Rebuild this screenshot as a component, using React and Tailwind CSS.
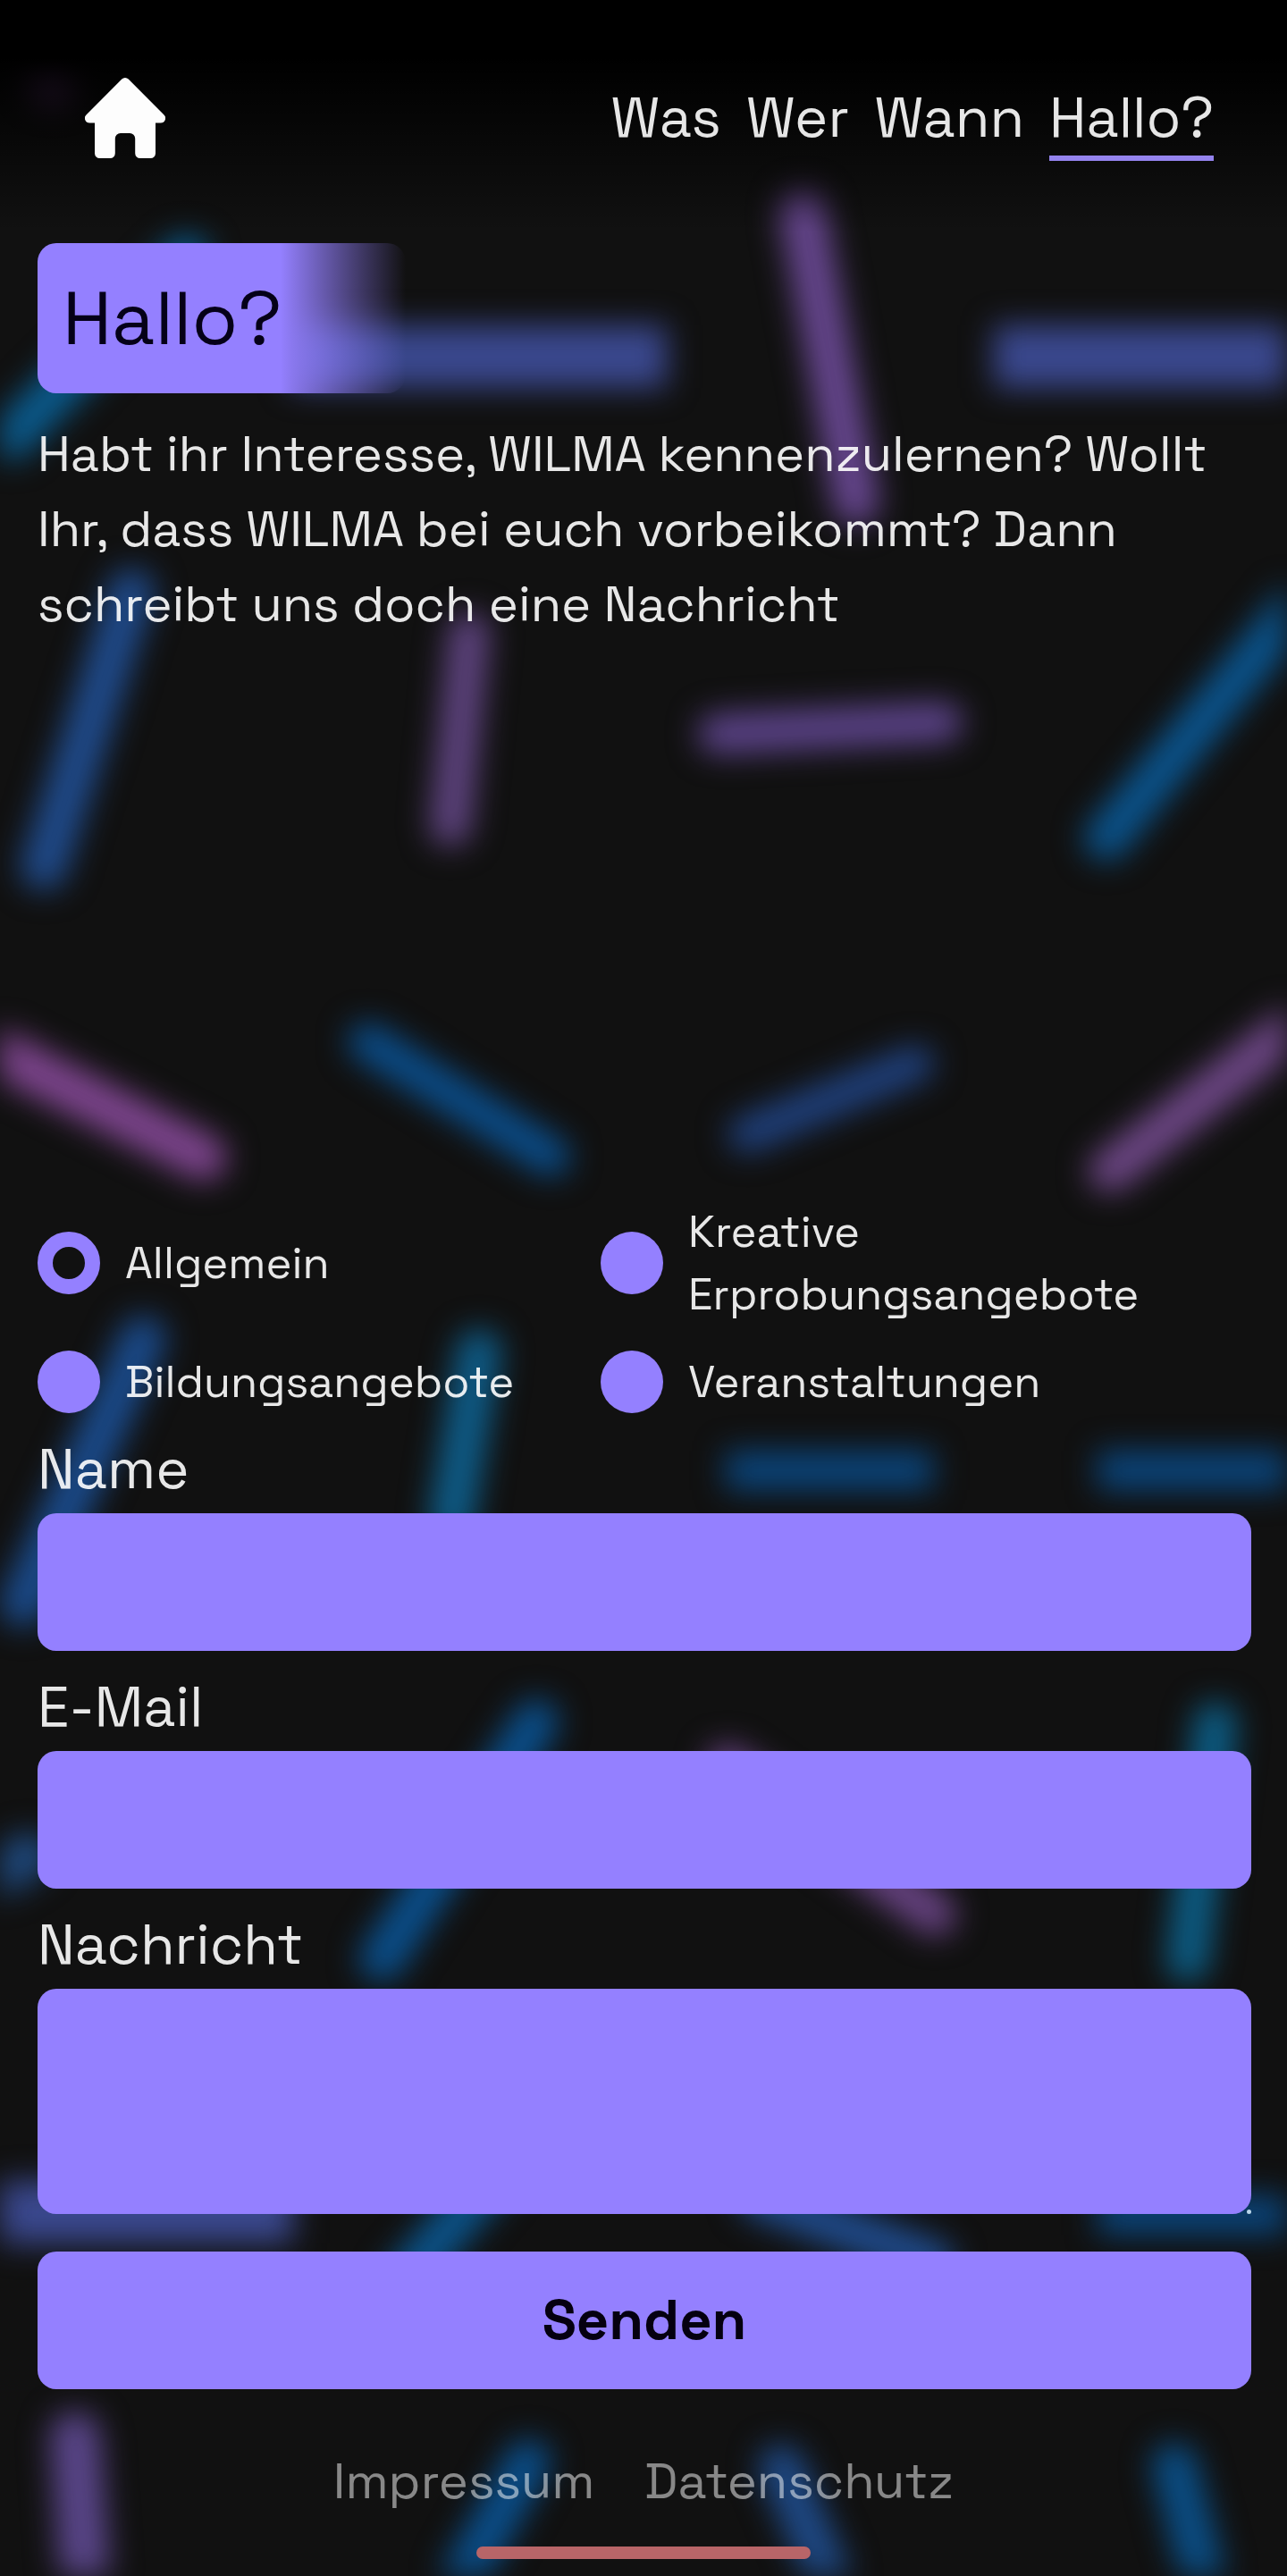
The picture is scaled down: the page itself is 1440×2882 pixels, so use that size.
import { useState } from "react";

const strokes = [
  { x1: 325, y1: 399, x2: 746, y2: 399, w: 70, c: "#3a488e", cap: "butt" },
  { x1: 1112, y1: 399, x2: 1440, y2: 399, w: 70, c: "#3a488e", cap: "butt" },
  { x1: 898, y1: 238, x2: 958, y2: 562, w: 52, c: "#66468e" },
  { x1: 209, y1: 288, x2: 12, y2: 490, w: 50, c: "#0a5a8c" },
  { x1: 56, y1: 82, x2: 58, y2: 90, w: 52, c: "#6a3a80" },
  { x1: 147, y1: 662, x2: 49, y2: 970, w: 52, c: "#1f4a8a" },
  { x1: 525, y1: 708, x2: 504, y2: 924, w: 46, c: "#5f4480" },
  { x1: 804, y1: 821, x2: 1054, y2: 808, w: 46, c: "#5a4286" },
  { x1: 1455, y1: 672, x2: 1238, y2: 938, w: 50, c: "#0a528a" },
  { x1: -20, y1: 1168, x2: 228, y2: 1295, w: 52, c: "#7c448c" },
  { x1: 412, y1: 1166, x2: 616, y2: 1294, w: 44, c: "#0a4c88" },
  { x1: 836, y1: 1269, x2: 1024, y2: 1190, w: 42, c: "#1f407c" },
  { x1: 1455, y1: 1142, x2: 1242, y2: 1310, w: 48, c: "#6c4684" },
  { x1: 160, y1: 1498, x2: 26, y2: 1794, w: 52, c: "#1a4a8a" },
  { x1: 536, y1: 1512, x2: 505, y2: 1700, w: 50, c: "#0e5c88" },
  { x1: 812, y1: 1645, x2: 1044, y2: 1645, w: 44, c: "#0a447a", cap: "butt" },
  { x1: 1228, y1: 1645, x2: 1440, y2: 1645, w: 44, c: "#0a447a", cap: "butt" },
  { x1: 600, y1: 1926, x2: 427, y2: 2192, w: 50, c: "#0a4e8a" },
  { x1: 814, y1: 1976, x2: 1046, y2: 2142, w: 48, c: "#664280" },
  { x1: 1360, y1: 1928, x2: 1329, y2: 2194, w: 48, c: "#0c5c84" },
  { x1: -20, y1: 2108, x2: 32, y2: 2076, w: 50, c: "#1f4a80" },
  { x1: 0, y1: 2475, x2: 328, y2: 2475, w: 70, c: "#3a488e", cap: "butt" },
  { x1: 600, y1: 2378, x2: 452, y2: 2552, w: 50, c: "#0b5288" },
  { x1: 850, y1: 2458, x2: 1044, y2: 2530, w: 48, c: "#1f4a8a" },
  { x1: 1228, y1: 2478, x2: 1440, y2: 2478, w: 44, c: "#0a447a", cap: "butt" },
  { x1: 84, y1: 2726, x2: 96, y2: 2895, w: 56, c: "#5a468a" },
  { x1: 591, y1: 2754, x2: 512, y2: 2895, w: 50, c: "#0a4e8a" },
  { x1: 874, y1: 2760, x2: 928, y2: 2885, w: 50, c: "#1e4986" },
  { x1: 1314, y1: 2758, x2: 1347, y2: 2885, w: 50, c: "#0a4e86" },
];

const topics = ["Allgemein", "Kreative Erprobungsangebote", "Bildungsangebote", "Veranstaltungen"];

const navLinks = ["Was", "Wer", "Wann", "Hallo?"];

function Backdrop() {
  return (
    <svg
      aria-hidden="true"
      viewBox="0 0 1440 2882"
      preserveAspectRatio="xMidYMin slice"
      className="absolute inset-0 h-full w-full overflow-hidden blur-[17px]"
    >
      {strokes.map((s, i) => (
        <line
          key={i}
          x1={s.x1}
          y1={s.y1}
          x2={s.x2}
          y2={s.y2}
          stroke={s.c}
          strokeWidth={s.w}
          strokeLinecap={s.cap || "round"}
        />
      ))}
    </svg>
  );
}

function HomeIcon() {
  return (
    <svg viewBox="0 0 90 90" className="size-[90px]" fill="#fdfdfd" aria-hidden="true">
      <path d="M41.3 1.6a5.3 5.3 0 0 1 7.4 0L88.5 41.4A5.3 5.3 0 0 1 84.7 50.5H79V84.5a5.5 5.5 0 0 1-5.5 5.5H61.7a5.5 5.5 0 0 1-5.5-5.5V68a6 6 0 0 0-6-6H39.8a6 6 0 0 0-6 6V84.5a5.5 5.5 0 0 1-5.5 5.5H16.5a5.5 5.5 0 0 1-5.5-5.5V50.5H5.3A5.3 5.3 0 0 1 1.5 41.4Z" />
    </svg>
  );
}

function Field({ id, label, children }) {
  return (
    <div className="mt-[14px] flex flex-col">
      <label htmlFor={id} className="pb-[2px] text-[63px] leading-[96px]">
        {label}
      </label>
      {children}
    </div>
  );
}

export default function App() {
  const [topic, setTopic] = useState(topics[0]);
  return (
    <div className="relative isolate flex min-h-screen flex-col overflow-hidden bg-[#111111] font-['Space_Grotesk','Inter',sans-serif] text-white/90">
      <div className="absolute inset-0 -z-10">
        <Backdrop />
        <div className="absolute inset-x-0 top-0 h-[260px] bg-linear-to-b from-black from-25% to-transparent" />
      </div>

      <header className="flex items-center justify-between pt-[84px] pr-[82px] pl-[95px]">
        <a href="#start" aria-label="Startseite">
          <HomeIcon />
        </a>
        <nav className="flex gap-[28px] text-[63px] leading-[86px]">
          {navLinks.map((name) => (
            <a
              key={name}
              href={"#" + name}
              className={
                name === "Hallo?"
                  ? "border-b-6 border-[#9483ee] pt-1"
                  : "border-b-6 border-transparent pt-1"
              }
            >
              {name}
            </a>
          ))}
        </nav>
      </header>

      <main className="flex grow flex-col justify-between pt-[92px] pr-[40px] pl-[42px]">
        <section>
          <h1 className="w-[412px] rounded-[21px] bg-linear-to-r from-[#9480ff] from-66% to-transparent p-[28px] text-[84px] leading-[112px] text-[#050018]">
            Hallo?
          </h1>
          <p className="mt-[26px] text-[56px] leading-[84px]">
            Habt ihr Interesse, WILMA kennenzulernen? Wollt Ihr, dass WILMA bei euch vorbeikommt? Dann
            schreibt uns doch eine Nachricht
          </p>
        </section>

        <form onSubmit={(e) => e.preventDefault()}>
          <div className="grid grid-cols-[602fr_728fr] gap-[28px]">
            {topics.map((t) => (
              <label key={t} className="flex items-center gap-[28px] text-[49px] leading-[70px]">
                <input
                  type="radio"
                  name="topic"
                  checked={topic === t}
                  onChange={() => setTopic(t)}
                  className="size-[70px] shrink-0 appearance-none rounded-full border-[#9480ff] bg-[#9480ff] checked:border-17 checked:bg-[#111111]"
                />
                <span>{t}</span>
              </label>
            ))}
          </div>

          <Field id="name" label="Name">
            <input
              id="name"
              type="text"
              className="h-[154px] w-full rounded-[21px] bg-[#9480ff] px-[28px] text-[56px] text-[#050018]"
            />
          </Field>
          <Field id="email" label="E-Mail">
            <input
              id="email"
              type="email"
              className="h-[154px] w-full rounded-[21px] bg-[#9480ff] px-[28px] text-[56px] text-[#050018]"
            />
          </Field>
          <Field id="message" label="Nachricht">
            <div className="relative flex">
              <textarea
                id="message"
                className="h-[252px] w-full resize-none rounded-[21px] bg-[#9480ff] p-[28px] text-[56px] text-[#050018]"
              />
              <span className="absolute right-0 bottom-0 size-[5px] rounded-full bg-[#b9d6ea]" />
            </div>
          </Field>

          <button
            type="submit"
            className="mt-[42px] h-[154px] w-full rounded-[21px] bg-[#9480ff] pb-[2px] text-[63px] font-semibold text-[#050010]"
          >
            Senden
          </button>
        </form>
      </main>

      <footer className="flex flex-col items-center pt-[61px] pb-[19px]">
        <div className="flex gap-[56px] text-[56px] leading-[84px] text-white/50">
          <a href="#impressum">Impressum</a>
          <a href="#datenschutz">Datenschutz</a>
        </div>
        <div className="mt-[31px] h-[14px] w-[26%] rounded-full bg-[#b86568]" />
      </footer>
    </div>
  );
}
